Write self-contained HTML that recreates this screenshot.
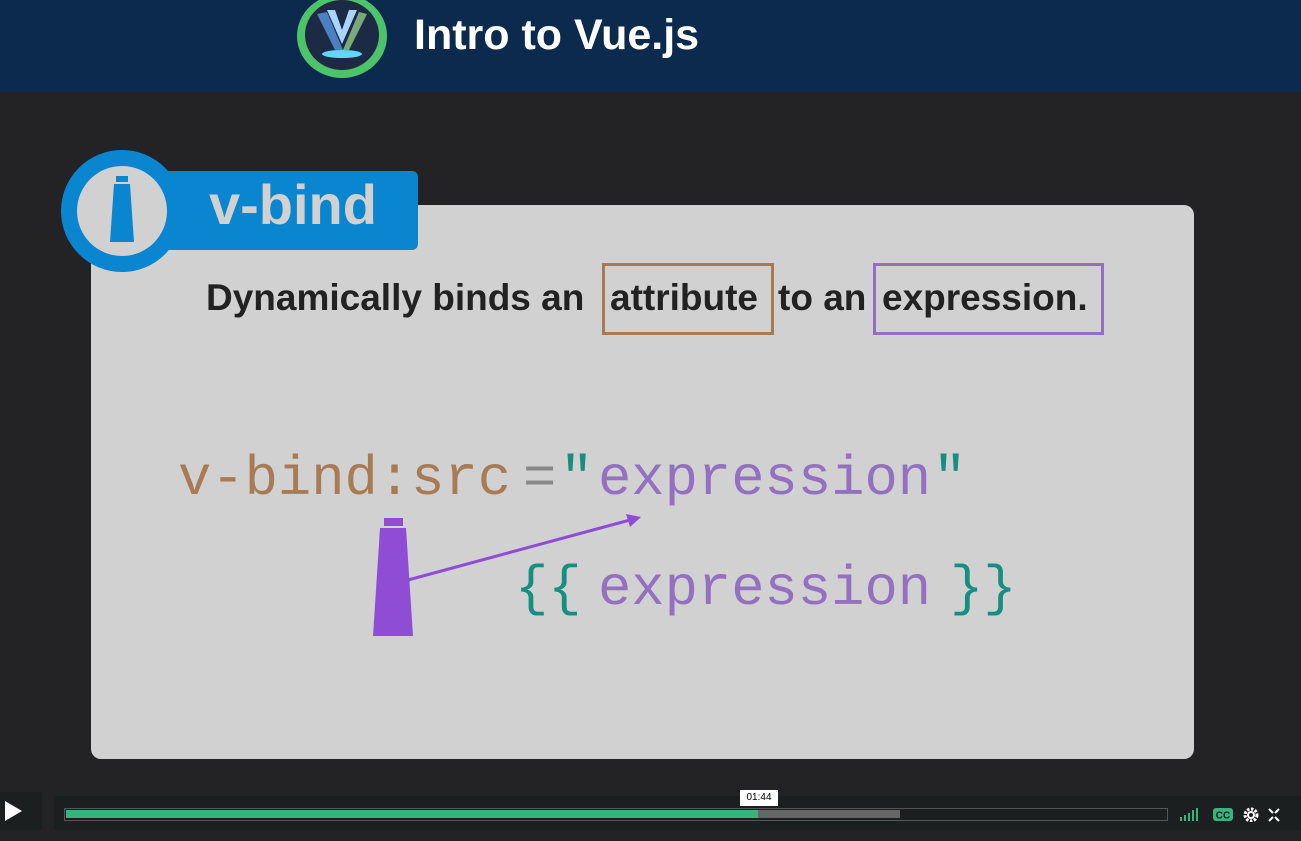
<!DOCTYPE html>
<html><head><style>
body{margin:0;width:1301px;height:841px;background:#232225;position:relative;overflow:hidden;font-family:"Liberation Sans",sans-serif}
.a{position:absolute}
.mono{font-family:"Liberation Mono",monospace;font-size:55.5px;white-space:pre}
.d{position:absolute;top:277px;font-size:37px;font-weight:bold;color:#222;white-space:pre}
</style></head><body>
<div class="a" style="left:0;top:0;width:1301px;height:92px;background:#0b2a4e"></div>
<div class="a" style="left:297px;top:-6px;width:90px;height:84px;border-radius:50%;background:#4ec46a"></div>
<div class="a" style="left:305px;top:0;width:74px;height:70px;border-radius:50%;background:#1d2a44"></div>
<svg class="a" style="left:305px;top:0" width="74" height="70"><path d="M12 14 L30 50 L38 50 L22 12Z" fill="#4a7fc0"/><path d="M62 14 L44 50 L38 50 L54 12Z" fill="#8fc98a" opacity=".8"/><path d="M22 10 L37 44 L52 10 L44 10 L37 30 L30 10Z" fill="#a8d4ff"/><ellipse cx="37" cy="54" rx="20" ry="4" fill="#5fd8ff"/></svg>
<div class="a" style="left:414px;top:11px;font-size:43px;font-weight:bold;color:#fff">Intro to Vue.js</div>

<div class="a" style="left:91px;top:205px;width:1103px;height:554px;background:#d1d1d1;border-radius:10px"></div>
<div class="a" style="left:150px;top:171px;width:268px;height:79px;background:#0a86d0;border-radius:6px"></div>
<div class="a" style="left:209px;top:172px;font-size:56px;font-weight:bold;color:#d1d1d1">v-bind</div>
<div class="a" style="left:61px;top:150px;width:122px;height:122px;border-radius:50%;background:#0a86d0"></div>
<div class="a" style="left:77px;top:166px;width:90px;height:90px;border-radius:50%;background:#d1d1d1"></div>
<svg class="a" style="left:108px;top:176px" width="28" height="68"><rect x="8" y="0" width="12" height="6" fill="#0a86d0"/><path d="M6 8 H22 L26 66 H2Z" fill="#0a86d0"/></svg>

<div class="d" style="left:206px">Dynamically binds an</div>
<div class="d" style="left:610px">attribute</div>
<div class="d" style="left:778px">to an</div>
<div class="d" style="left:882px">expression.</div>
<div class="a" style="left:602px;top:263px;width:166px;height:66px;border:3px solid #a87b55"></div>
<div class="a" style="left:873px;top:263px;width:225px;height:66px;border:3px solid #9370c0"></div>

<div class="a mono" style="left:178px;top:448px;color:#a87b55">v-bind:src</div>
<div class="a mono" style="left:523px;top:448px;color:#888">=</div>
<div class="a mono" style="left:560px;top:448px;color:#178f80">"</div>
<div class="a mono" style="left:598px;top:448px;color:#9370c0">expression</div>
<div class="a mono" style="left:933px;top:448px;color:#178f80">"</div>
<div class="a mono" style="left:515px;top:558px;color:#178f80">{{</div>
<div class="a mono" style="left:598px;top:558px;color:#9370c0">expression</div>
<div class="a mono" style="left:950px;top:558px;color:#178f80">}}</div>
<svg class="a" style="left:0;top:0" width="1301" height="841">
<rect x="384" y="518" width="19" height="8" fill="#8f4dd6"/>
<path d="M380 528 H406 L413 636 H373Z" fill="#8f4dd6"/>
<line x1="408" y1="580" x2="630" y2="520" stroke="#8f4dd6" stroke-width="3"/>
<path d="M641 517 L626 514 L630 527Z" fill="#8f4dd6"/>
</svg>

<div class="a" style="left:0;top:792px;width:42px;height:38px;background:#1c1f20"></div>
<svg class="a" style="left:4px;top:800px" width="20" height="22"><path d="M1 1 L18 11 L1 21Z" fill="#fff"/></svg>
<div class="a" style="left:54px;top:796px;width:1247px;height:34px;background:#1c1f20"></div>
<div class="a" style="left:64px;top:808px;width:1102px;height:11px;border:1px solid #555;box-sizing:content-box"></div>
<div class="a" style="left:66px;top:810px;width:834px;height:8px;background:#666"></div>
<div class="a" style="left:66px;top:810px;width:692px;height:8px;background:#36b37e"></div>
<div class="a" style="left:740px;top:790px;width:38px;height:16px;background:#fff;font-size:10px;color:#000;text-align:center;line-height:16px">01:44</div>
<svg class="a" style="left:1178px;top:806px" width="110" height="16">
<rect x="2" y="11" width="2" height="4" fill="#36b37e"/><rect x="6" y="9" width="2" height="6" fill="#36b37e"/><rect x="10" y="7" width="2" height="8" fill="#36b37e"/><rect x="14" y="4" width="2" height="11" fill="#36b37e"/><rect x="18" y="2" width="2" height="13" fill="#36b37e"/>
<rect x="35" y="2" width="20" height="13" rx="3" fill="#36b37e"/><text x="45" y="12.5" font-size="10" font-weight="bold" text-anchor="middle" fill="#1c1f20" font-family="Liberation Sans">CC</text>
<circle cx="73" cy="9" r="6" fill="none" stroke="#fff" stroke-width="3" stroke-dasharray="2.5 1.5"/><circle cx="73" cy="9" r="4" fill="#fff"/><circle cx="73" cy="9" r="2" fill="#1c1f20"/>
<path d="M91 3 L95 7 M101 3 L97 7 M91 15 L95 11 M101 15 L97 11" stroke="#fff" stroke-width="2"/>
</svg>
</body></html>
